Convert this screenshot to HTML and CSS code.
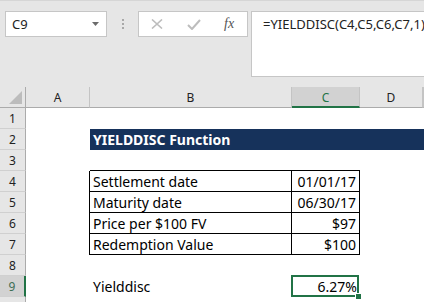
FILE: index.html
```html
<!DOCTYPE html>
<html lang="en">
<head>
    <meta charset="UTF-8">
    <title>YIELDDISC Function</title>
    <link rel="stylesheet" href="styles.css">
</head>
<body>
    <div class="toolbar">
        <div class="namebox">
            <span>C9</span>
            <svg class="caret" width="7" height="4" viewBox="0 0 7 4"><path d="M0 0H7L3.5 4Z" fill="#6b6b6b"/></svg>
        </div>
        <div class="grip"><i></i><i></i><i></i></div>
        <div class="fnbox">
            <svg width="12" height="10" viewBox="0 0 12 10"><path d="M1 0.5L11 9.5M11 0.5L1 9.5" stroke="#bdbdbd" stroke-width="1.6" fill="none"/></svg>
            <svg width="14" height="11" viewBox="0 0 14 11"><path d="M1 6L5 10L13 1" stroke="#bdbdbd" stroke-width="2" fill="none"/></svg>
            <span class="fx">fx</span>
        </div>
        <div class="formula">=YIELDDISC(C4,C5,C6,C7,1)</div>
    </div>

    <div class="sheet">
        <div class="row head">
            <div class="corner"><svg width="13" height="13" viewBox="0 0 13 13"><path d="M13 0V13H0Z" fill="#bcbcbc"/></svg></div>
            <div class="ch">A</div>
            <div class="ch">B</div>
            <div class="ch active">C</div>
            <div class="ch">D</div>
            <div class="ch"></div>
        </div>
        <div class="row">
            <div class="rh">1</div>
        </div>
        <div class="row">
            <div class="rh">2</div>
            <div class="cell"></div>
            <div class="cell banner title">YIELDDISC Function</div>
            <div class="cell banner"></div>
            <div class="cell banner"></div>
            <div class="cell banner"></div>
        </div>
        <div class="row">
            <div class="rh">3</div>
            <div class="cell"></div>
            <div class="cell bb"></div>
            <div class="cell bb"></div>
        </div>
        <div class="row">
            <div class="rh">4</div>
            <div class="cell br"></div>
            <div class="cell bb br">Settlement date</div>
            <div class="cell bb br num">01/01/17</div>
        </div>
        <div class="row">
            <div class="rh">5</div>
            <div class="cell br"></div>
            <div class="cell bb br">Maturity date</div>
            <div class="cell bb br num">06/30/17</div>
        </div>
        <div class="row">
            <div class="rh">6</div>
            <div class="cell br"></div>
            <div class="cell bb br">Price per $100 FV</div>
            <div class="cell bb br num">$97</div>
        </div>
        <div class="row">
            <div class="rh">7</div>
            <div class="cell br"></div>
            <div class="cell bb br">Redemption Value</div>
            <div class="cell bb br num">$100</div>
        </div>
        <div class="row">
            <div class="rh">8</div>
        </div>
        <div class="row">
            <div class="rh active">9</div>
            <div class="cell"></div>
            <div class="cell">Yielddisc</div>
            <div class="cell num sel">6.27%</div>
        </div>
        <div class="row">
            <div class="rh"></div>
        </div>
    </div>
</body>
</html>
```

FILE: styles.css
```css
body {
    margin: 0;
    width: 424px;
    height: 302px;
    overflow: hidden;
    background: #e6e6e6;
    font-family: "Noto Sans", "Open Sans", sans-serif;
}
.toolbar {
    height: 87px;
    box-sizing: border-box;
    border-top: 1px solid #d6d6d6;
    padding-top: 10px;
    display: flex;
    align-items: flex-start;
    overflow: hidden;
}
.toolbar > div {
    flex-shrink: 0;
}
.namebox {
    margin-left: 5px;
    width: 102px;
    height: 26px;
    box-sizing: border-box;
    border: 1px solid #c6c6c6;
    background: white;
    display: flex;
    align-items: center;
    justify-content: space-between;
    padding: 0 7px 0 6px;
    font-size: 13px;
    color: #222;
}
.caret {
    margin-top: -1px;
}
.grip {
    margin: 8px 0 0 15px;
    width: 2px;
    display: flex;
    flex-direction: column;
    gap: 2px;
}
.grip i {
    width: 2px;
    height: 2px;
    background: #a8a8a8;
}
.fnbox {
    margin-left: 14px;
    width: 110px;
    height: 26px;
    box-sizing: border-box;
    border: 1px solid #c6c6c6;
    background: white;
    display: flex;
    align-items: center;
    padding-left: 12px;
    gap: 24px;
}
.fx {
    font-family: "Liberation Serif", serif;
    font-style: italic;
    font-size: 14px;
    color: #555;
    margin-left: -1px;
}
.formula {
    margin-left: 3px;
    width: 190px;
    height: 66px;
    box-sizing: border-box;
    border: 1px solid #c6c6c6;
    background: white;
    padding: 3px 0 0 11px;
    font-size: 13px;
    color: #222;
}
.sheet {
    background: white;
}
.row {
    display: grid;
    grid-template-columns: 26px 64px 202px 68px 63px 1fr;
    height: 21px;
}
.row > div {
    box-sizing: border-box;
    height: 21px;
}
.corner, .ch {
    background: #e6e6e6;
    border-right: 1px solid #c4c4c4;
    border-bottom: 1px solid #ababab;
}
.corner {
    display: flex;
    align-items: flex-end;
    justify-content: flex-end;
    padding: 0 3px 3px 0;
    border-right-color: #ababab;
}
.ch {
    text-align: center;
    font-size: 12px;
    line-height: 21px;
    color: #222;
}
.ch.active {
    background: #d2d2d2;
    color: #217346;
    border-bottom: 2px solid #217346;
}
.rh {
    background: #e6e6e6;
    border-right: 1px solid #ababab;
    border-bottom: 1px solid #d0d0d0;
    text-align: center;
    font-size: 12px;
    line-height: 21px;
    color: #222;
}
.rh.active {
    background: #d2d2d2;
    color: #3f6e55;
    border-right: 2px solid #217346;
}
.cell {
    font-size: 14px;
    line-height: 21px;
    padding: 0 3px;
    white-space: nowrap;
    color: #000;
}
.bb {
    border-bottom: 1px solid #000;
}
.br {
    border-right: 1px solid #000;
}
.num {
    text-align: right;
}
.banner {
    background: #16325b;
}
.title {
    color: white;
    font-weight: bold;
    font-size: 14px;
}
.sel {
    position: relative;
}
.sel::before {
    content: "";
    position: absolute;
    top: -1px;
    left: -1px;
    right: 1px;
    bottom: 0;
    border: 2px solid #217346;
}
.sel::after {
    content: "";
    position: absolute;
    right: -2px;
    bottom: -3px;
    width: 5px;
    height: 5px;
    background: #217346;
    border: 1px solid white;
}
```
